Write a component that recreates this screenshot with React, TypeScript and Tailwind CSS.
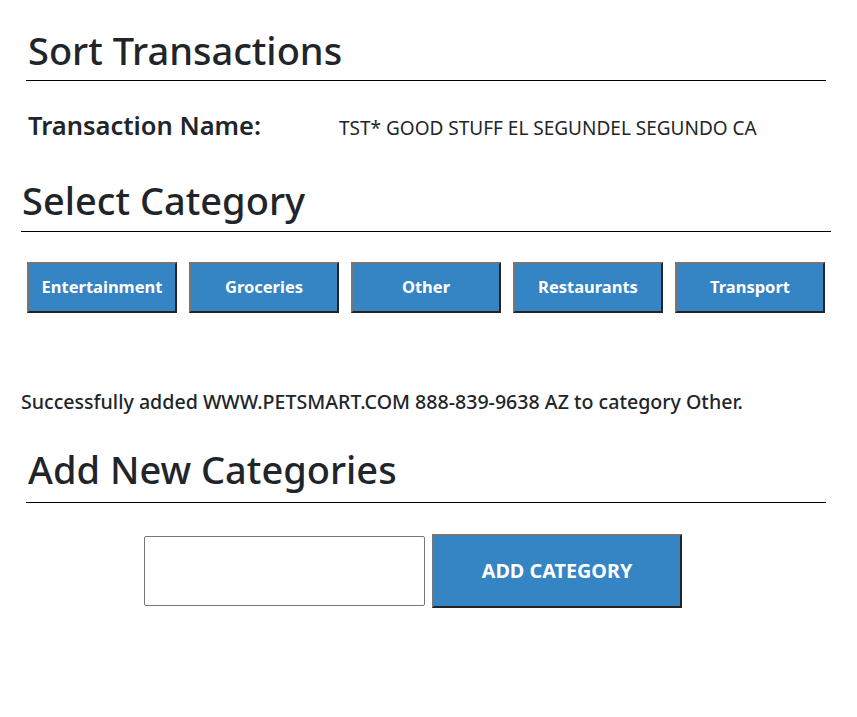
import { useState } from 'react';

const categories = ['Entertainment', 'Groceries', 'Other', 'Restaurants', 'Transport'];

function App() {
  const [newCategory, setNewCategory] = useState('');

  return (
    <div className="min-h-[717px] bg-white text-[#212529] font-['Noto_Sans','Open_Sans',sans-serif]">
      <div className="ml-[26px] w-[800px] pt-[24px]">
        <h1 className="pl-[2px] text-[38px] leading-[52px] font-medium">Sort Transactions</h1>
        <hr className="mt-[4px] border-t border-black" />
        <div className="flex items-baseline mt-[29px] pl-[2px]">
          <h4 className="w-[311px] text-[25.5px] leading-[30px] font-semibold">Transaction Name:</h4>
          <span className="text-[19px]">TST* GOOD STUFF EL SEGUNDEL SEGUNDO CA</span>
        </div>
      </div>

      <div className="ml-[21px] w-[810px] mt-[31px]">
        <h1 className="pl-[1px] text-[38px] leading-[52px] font-medium">Select Category</h1>
        <hr className="mt-[5px] border-t border-black" />
        <div className="flex gap-[12px] mt-[30px] pl-[6px]">
          {categories.map(c => (
            <button
              key={c}
              type="button"
              className="w-[150px] h-[51px] bg-[#3584c4] text-white text-[16.5px] font-bold border-2 border-t-[#767676] border-l-[#767676] border-b-[#232323] border-r-[#232323]"
            >
              {c}
            </button>
          ))}
        </div>
        <p className="mt-[75px] text-[19.6px] leading-[28px] font-medium">
          Successfully added WWW.PETSMART.COM 888-839-9638 AZ to category Other.
        </p>
      </div>

      <div className="ml-[26px] w-[800px] mt-[27px]">
        <h1 className="pl-[2px] text-[38px] leading-[52px] font-medium">Add New Categories</h1>
        <hr className="mt-[7px] border-t border-black" />
        <div className="flex items-center gap-[7px] mt-[31px] pl-[118px]">
          <input
            value={newCategory}
            onChange={e => setNewCategory(e.target.value)}
            type="text"
            className="w-[281px] h-[70px] border border-[#767676] rounded-[2px] px-2"
          />
          <button
            type="button"
            className="w-[250px] h-[74px] bg-[#3584c4] text-white text-[19.8px] font-bold border-2 border-t-[#767676] border-l-[#767676] border-b-[#232323] border-r-[#232323]"
          >
            ADD CATEGORY
          </button>
        </div>
      </div>
    </div>
  );
}

export default App;
